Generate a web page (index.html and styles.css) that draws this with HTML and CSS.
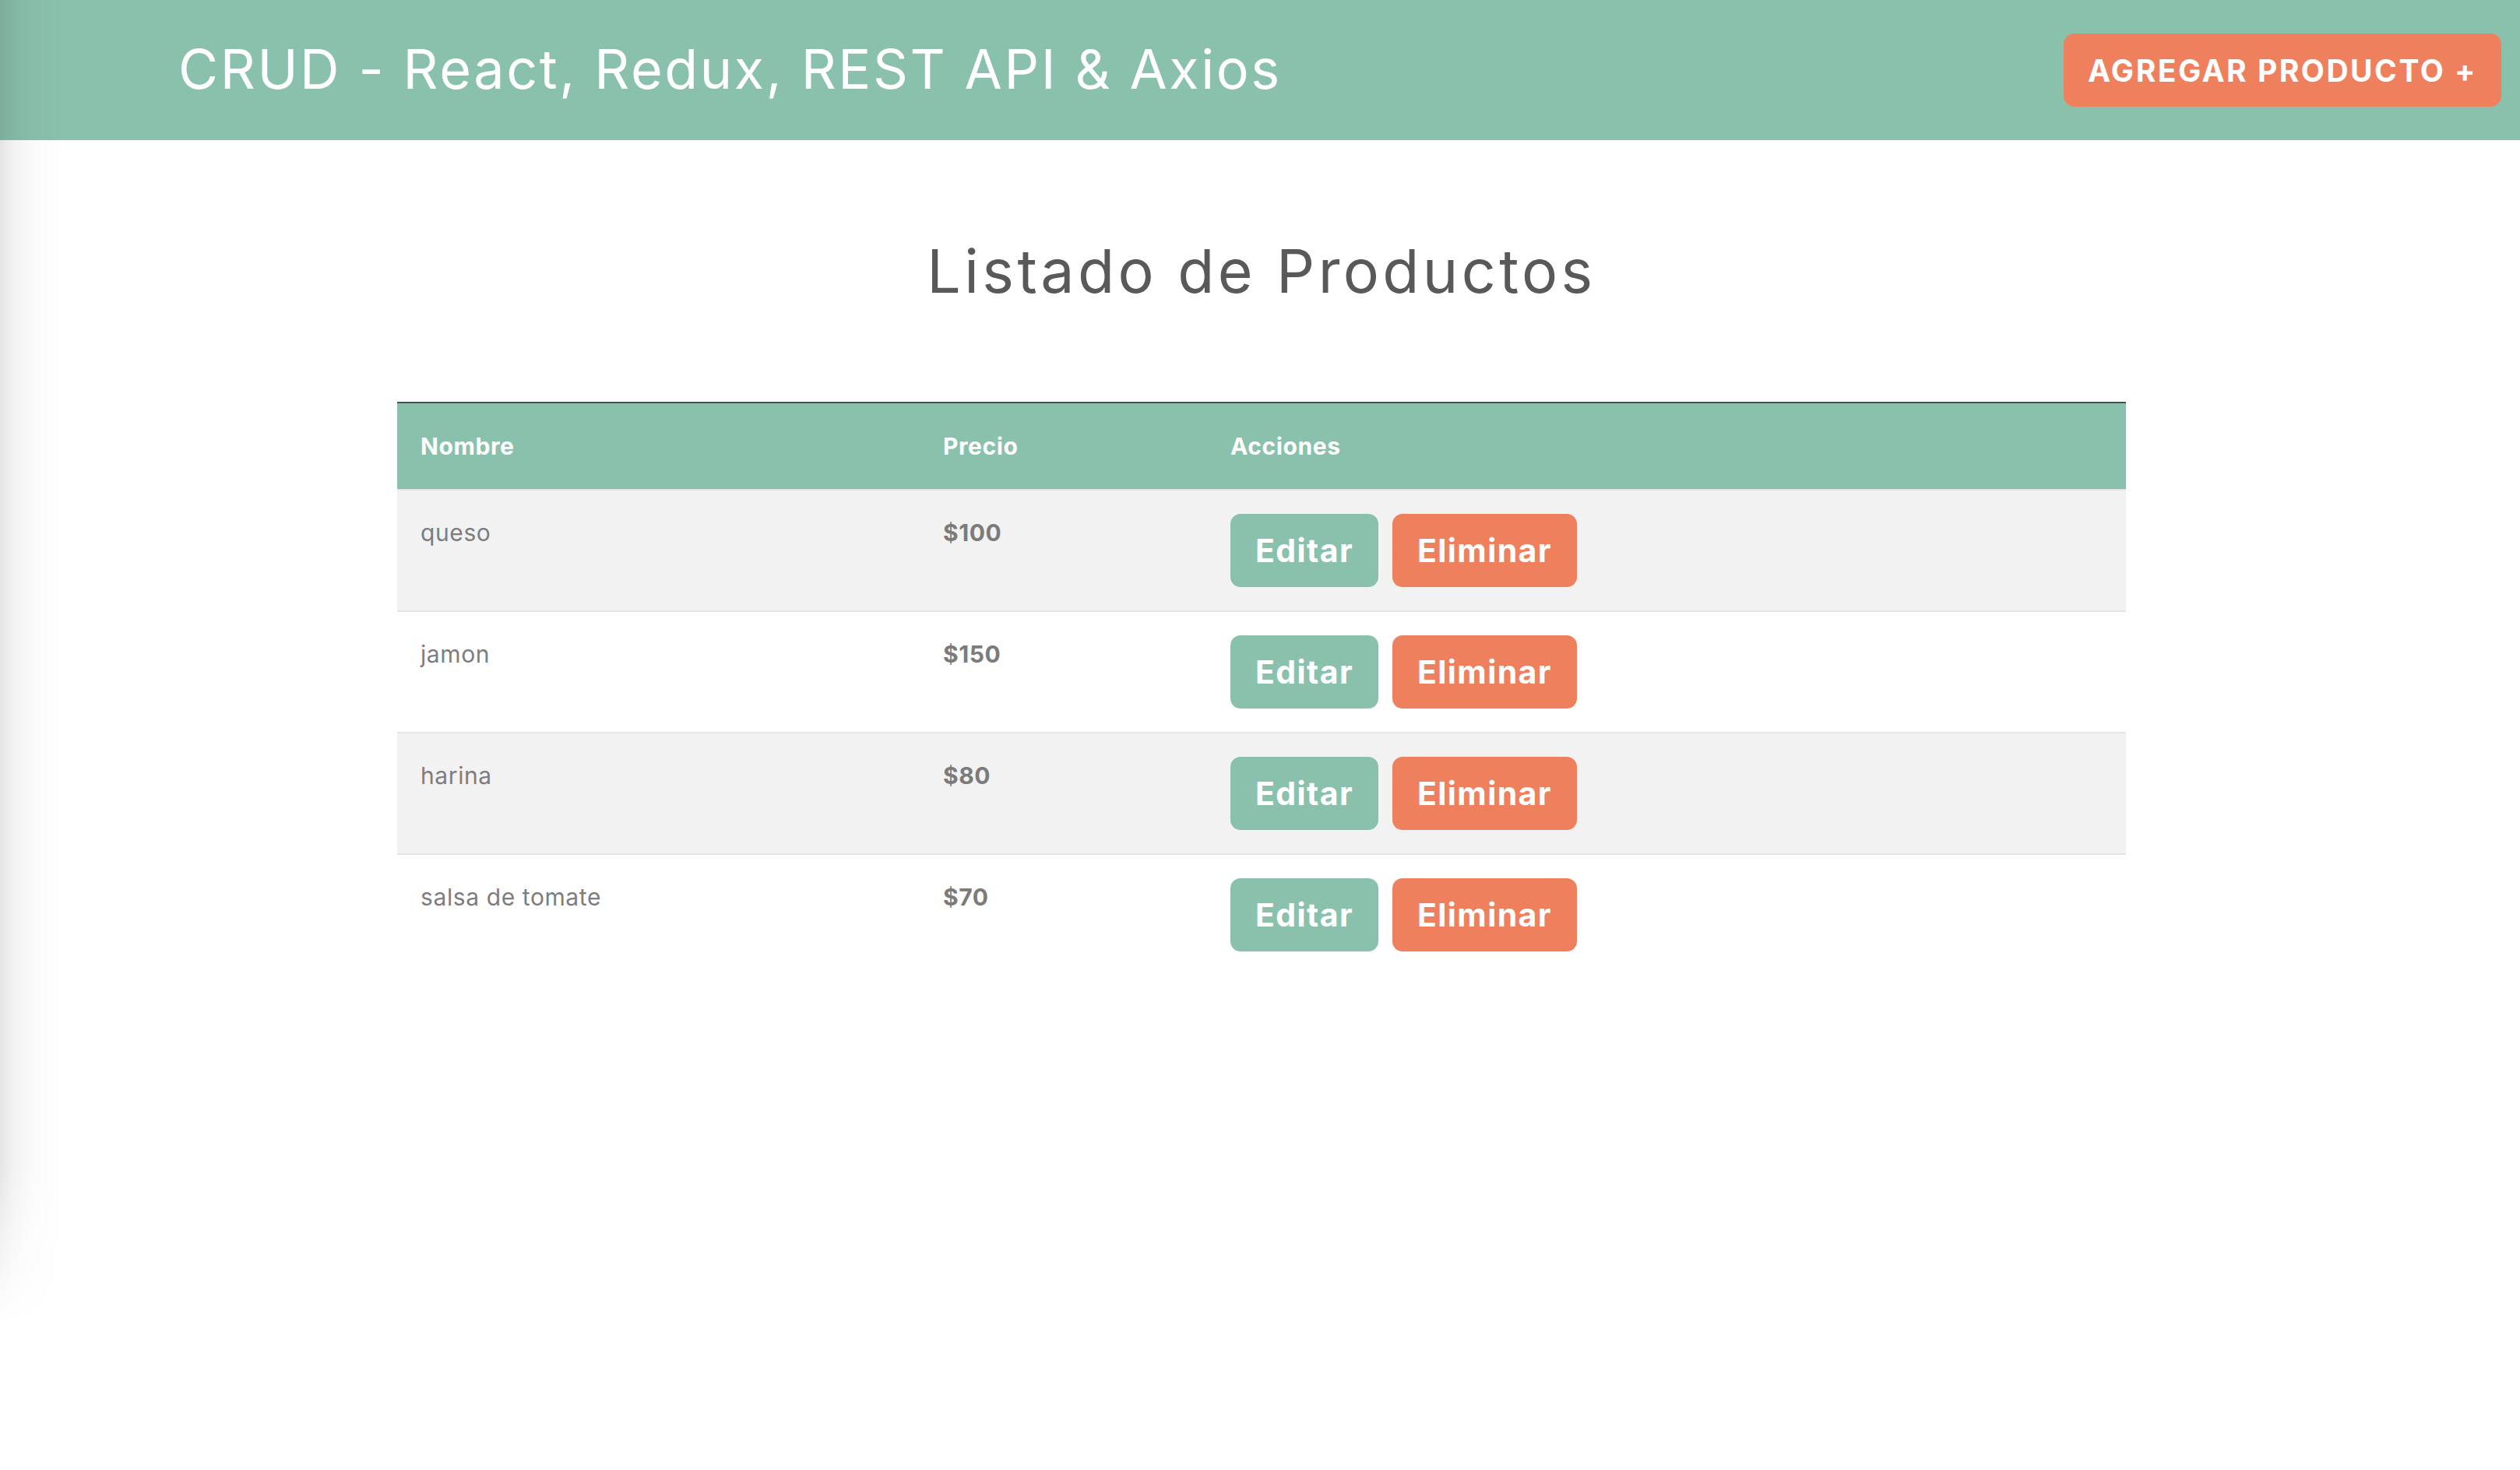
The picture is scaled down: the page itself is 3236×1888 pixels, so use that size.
FILE: index.html
```html
<!DOCTYPE html>
<html lang="es">
<head>
<meta charset="utf-8">
<title>CRUD - React, Redux, REST API &amp; Axios</title>
<link rel="stylesheet" href="styles.css">
</head>
<body>
<header class="navbar">
  <h1 class="brand">CRUD - React, Redux, REST API &amp; Axios</h1>
  <a class="btn-add" href="#">AGREGAR PRODUCTO +</a>
</header>
<main class="container">
  <h2 class="page-title">Listado de Productos</h2>
  <table class="products">
    <thead>
      <tr>
        <th class="col-name">Nombre</th>
        <th class="col-price">Precio</th>
        <th>Acciones</th>
      </tr>
    </thead>
    <tbody>
      <tr class="odd">
        <td class="name">queso</td>
        <td class="price">$100</td>
        <td class="actions"><div class="btns"><a class="btn btn-edit" href="#">Editar</a><button class="btn btn-del">Eliminar</button></div></td>
      </tr>
      <tr>
        <td class="name">jamon</td>
        <td class="price">$150</td>
        <td class="actions"><div class="btns"><a class="btn btn-edit" href="#">Editar</a><button class="btn btn-del">Eliminar</button></div></td>
      </tr>
      <tr class="odd">
        <td class="name">harina</td>
        <td class="price">$80</td>
        <td class="actions"><div class="btns"><a class="btn btn-edit" href="#">Editar</a><button class="btn btn-del">Eliminar</button></div></td>
      </tr>
      <tr>
        <td class="name">salsa de tomate</td>
        <td class="price">$70</td>
        <td class="actions"><div class="btns"><a class="btn btn-edit" href="#">Editar</a><button class="btn btn-del">Eliminar</button></div></td>
      </tr>
    </tbody>
  </table>
</main>
<div class="edge-shadow"></div>
</body>
</html>
```
FILE: styles.css
```css
* { box-sizing: border-box; }

html, body {
  margin: 0;
  padding: 0;
  background: #ffffff;
}

body {
  font-family: Inter, "Noto Sans", sans-serif;
  color: #7a7a7a;
}

.navbar {
  height: 180px;
  background: #8ac1ad;
  display: flex;
  align-items: center;
  justify-content: space-between;
  padding: 0 24px 0 229px;
}

.brand {
  margin: 0;
  padding-bottom: 3px;
  font-family: Inter, "Noto Sans", sans-serif;
  font-weight: 400;
  font-size: 70px;
  line-height: 1;
  letter-spacing: 2.6px;
  color: #ffffff;
}

.btn-add {
  display: flex;
  align-items: center;
  height: 94px;
  padding: 0 31px;
  border-radius: 14px;
  background: #ef805e;
  color: #ffffff;
  font-family: Inter, "Noto Sans", sans-serif;
  font-weight: 700;
  font-size: 39px;
  letter-spacing: 2.5px;
  text-decoration: none;
}

.container {
  width: 2224px;
  margin: 0 auto;
  padding-left: 4px;
}

.page-title {
  margin: 122px 0 122px;
  text-align: center;
  font-family: Inter, "Noto Sans", sans-serif;
  font-weight: 400;
  font-size: 77px;
  line-height: 1.2;
  letter-spacing: 4.4px;
  color: #595959;
}

.products {
  width: 100%;
  border-collapse: collapse;
  table-layout: fixed;
  font-size: 30px;
  line-height: 1.45;
  letter-spacing: 0.6px;
}

.products th {
  height: 112px;
  padding: 0 30px;
  background: #8ac1ad;
  color: #ffffff;
  font-weight: 700;
  text-align: left;
  border-top: 2px solid #454d55;
}

.col-name { width: 671px; }
.col-price { width: 369px; }

.products td {
  padding: 33px 30px 30px;
  vertical-align: top;
  border-top: 2px solid #e4e4e4;
}

.products tr.odd td { background: #f2f2f2; }

.products td.name { color: #7d7d7d; }

.products td.price { font-weight: 700; color: #7b7b7b; }

.products td.actions { padding-top: 30px; }

.btns {
  display: flex;
  gap: 18px;
}

.btn {
  display: flex;
  align-items: center;
  height: 94px;
  padding: 0 32px;
  border: none;
  border-radius: 13px;
  color: #ffffff;
  font-family: Inter, "Noto Sans", sans-serif;
  font-weight: 700;
  font-size: 41px;
  letter-spacing: 1.4px;
  text-decoration: none;
}

.btn-edit { background: #8ac1ad; }
.btn-del { background: #ef805e; }

.edge-shadow {
  position: fixed;
  left: 0;
  top: 0;
  width: 80px;
  height: 1700px;
  pointer-events: none;
  background: linear-gradient(to right, rgba(0,0,0,0.10) 0, rgba(0,0,0,0.05) 18px, rgba(0,0,0,0.02) 40px, rgba(0,0,0,0) 80px);
  -webkit-mask-image: linear-gradient(to bottom, #000 0, #000 88%, transparent 100%);
  mask-image: linear-gradient(to bottom, #000 0, #000 88%, transparent 100%);
}
```
